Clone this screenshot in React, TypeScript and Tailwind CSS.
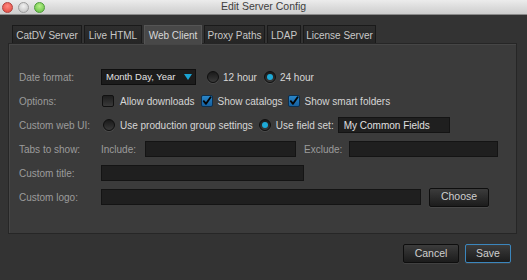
import React from 'react';

const tabs = [
  { name: 'CatDV Server', w: 'w-[70px]' },
  { name: 'Live HTML', w: 'w-[58px]' },
  { name: 'Web Client', w: 'w-[58px]', active: true },
  { name: 'Proxy Paths', w: 'w-[61px]' },
  { name: 'LDAP', w: 'w-[34px]' },
  { name: 'License Server', w: 'w-[73px]' },
];

function Radio({ on }: { on?: boolean }) {
  return (
    <span className="flex h-[12px] w-[12px] shrink-0 items-center justify-center rounded-full border border-[#0f0f0f] bg-gradient-to-b from-[#1a1a1a] to-[#3a3a3a] shadow-[0_1px_0_rgba(255,255,255,0.08)]">
      {on && <span className="h-[6px] w-[6px] rounded-full bg-[#1ea9d6]" />}
    </span>
  );
}

function Check({ on }: { on?: boolean }) {
  return on ? (
    <span className="flex h-[12px] w-[12px] shrink-0 items-center justify-center rounded-[2px] border border-[#0d2f4d] bg-gradient-to-b from-[#2a86c8] to-[#1560a0]">
      <svg width="10" height="10" viewBox="0 0 10 10">
        <path d="M1.8 5.2 L4 7.8 L8.6 1.2" fill="none" stroke="#050505" strokeWidth="1.9" strokeLinecap="round" strokeLinejoin="round" />
      </svg>
    </span>
  ) : (
    <span className="h-[12px] w-[12px] shrink-0 rounded-[2px] border border-[#111] bg-gradient-to-b from-[#1e1e1e] to-[#3a3a3a]" />
  );
}

function Label({ children }: { children: React.ReactNode }) {
  return <span className="w-[82px] shrink-0 text-[#9b9b9b]">{children}</span>;
}

function Field({ w, children }: { w: string; children?: React.ReactNode }) {
  return (
    <div className={`${w} flex h-[16px] shrink-0 items-center border border-[#141414] bg-[#1f1f1f] px-[5px] text-[#e0e0e0]`}>
      {children}
    </div>
  );
}

function Btn({ children, w, primary }: { children: React.ReactNode; w: string; primary?: boolean }) {
  return (
    <button
      className={`${w} h-[19px] rounded-[2px] border bg-gradient-to-b from-[#3c3c3c] to-[#1c1c1c] text-[10.5px] text-[#cfcfcf] shadow-[0_1px_0_rgba(255,255,255,0.07)] ${
        primary ? 'border-[#3b86bd]' : 'border-[#0e0e0e]'
      }`}
    >
      {children}
    </button>
  );
}

export default function App() {
  return (
    <div
      className="flex h-[280px] w-[527px] flex-col overflow-hidden bg-[#333333] text-[10px]"
      style={{ fontFamily: '"Liberation Sans", Arial, sans-serif' }}
    >
      <div className="relative flex h-[15px] shrink-0 items-center justify-center border-b border-[#8a8a8a] bg-gradient-to-b from-[#ececec] to-[#cdcdcd]">
        <div className="absolute left-[2px] top-[2px] flex gap-[5px]">
          <span className="h-[11px] w-[11px] rounded-full border border-[#b0433f] bg-[radial-gradient(circle_at_50%_35%,#ff8a80,#e0433a)]" />
          <span className="h-[11px] w-[11px] rounded-full border border-[#9c9c9c] bg-[radial-gradient(circle_at_50%_35%,#f2f2f2,#bcbcbc)]" />
          <span className="h-[11px] w-[11px] rounded-full border border-[#4f9a3a] bg-[radial-gradient(circle_at_50%_35%,#b8f08a,#5cbc3c)]" />
        </div>
        <span className="text-[10.5px] text-[#3e3e3e]">Edit Server Config</span>
      </div>

      <div className="mt-[10px] flex gap-[2px] pl-[12px]">
        {tabs.map((t) => (
          <div
            key={t.name}
            className={`${t.w} -mb-px flex h-[19px] items-center justify-center border border-b-0 ${
              t.active
                ? 'z-10 border-[#555] bg-[#484848] text-[#d8d8d8]'
                : 'border-[#1a1a1a] bg-gradient-to-b from-[#2e2e2e] to-[#252525] text-[#c8c8c8]'
            }`}
          >
            {t.name}
          </div>
        ))}
      </div>

      <div className="mx-[8px] flex h-[191px] w-[509px] flex-col gap-[8px] border border-[#262626] bg-[#3b3b3b] pl-[10px] pt-[25px] shadow-[inset_1px_1px_0_rgba(255,255,255,0.06)]">
        <div className="flex h-[16px] items-center">
          <Label>Date format:</Label>
          <div className="flex h-[16px] w-[95px] items-center justify-between border border-[#0f0f0f] bg-[#1c1c1c] pl-[4px] pr-[3px] text-[9.5px] text-[#e2e2e2]">
            <span>Month Day, Year</span>
            <svg width="8" height="6" viewBox="0 0 8 6">
              <path d="M0 0 H8 L4 6 Z" fill="#1aa3d2" />
            </svg>
          </div>
          <div className="ml-[11px] flex items-center gap-[4px]">
            <Radio />
            <span className="text-[#d6d6d6]">12 hour</span>
          </div>
          <div className="ml-[7px] flex items-center gap-[4px]">
            <Radio on />
            <span className="text-[#d6d6d6]">24 hour</span>
          </div>
        </div>

        <div className="flex h-[16px] items-center">
          <Label>Options:</Label>
          <div className="ml-[1px] flex items-center gap-[6px]">
            <Check />
            <span className="text-[#d6d6d6]">Allow downloads</span>
          </div>
          <div className="ml-[6px] flex items-center gap-[5px]">
            <Check on />
            <span className="text-[#d6d6d6]">Show catalogs</span>
          </div>
          <div className="ml-[5px] flex items-center gap-[5px]">
            <Check on />
            <span className="text-[#d6d6d6]">Show smart folders</span>
          </div>
        </div>

        <div className="flex h-[16px] items-center">
          <Label>Custom web UI:</Label>
          <div className="ml-[2px] flex items-center gap-[5px]">
            <Radio />
            <span className="text-[#d6d6d6]">Use production group settings</span>
          </div>
          <div className="ml-[6px] flex items-center gap-[5px]">
            <Radio on />
            <span className="text-[#d6d6d6]">Use field set:</span>
          </div>
          <div className="ml-[4px]">
            <Field w="w-[112px]">My Common Fields</Field>
          </div>
        </div>

        <div className="flex h-[16px] items-center">
          <Label>Tabs to show:</Label>
          <span className="w-[44px] text-[#9b9b9b]">Include:</span>
          <Field w="w-[151px]" />
          <span className="ml-[8px] w-[45px] text-[#9b9b9b]">Exclude:</span>
          <Field w="w-[149px]" />
        </div>

        <div className="flex h-[16px] items-center">
          <Label>Custom title:</Label>
          <Field w="w-[203px]" />
        </div>

        <div className="flex h-[16px] items-center">
          <Label>Custom logo:</Label>
          <Field w="w-[320px]" />
          <div className="ml-[8px]">
            <Btn w="w-[60px]">Choose</Btn>
          </div>
        </div>
      </div>

      <div className="mt-[10px] flex justify-end gap-[6px] pr-[16px]">
        <Btn w="w-[56px]">Cancel</Btn>
        <Btn w="w-[46px]" primary>
          Save
        </Btn>
      </div>
    </div>
  );
}
